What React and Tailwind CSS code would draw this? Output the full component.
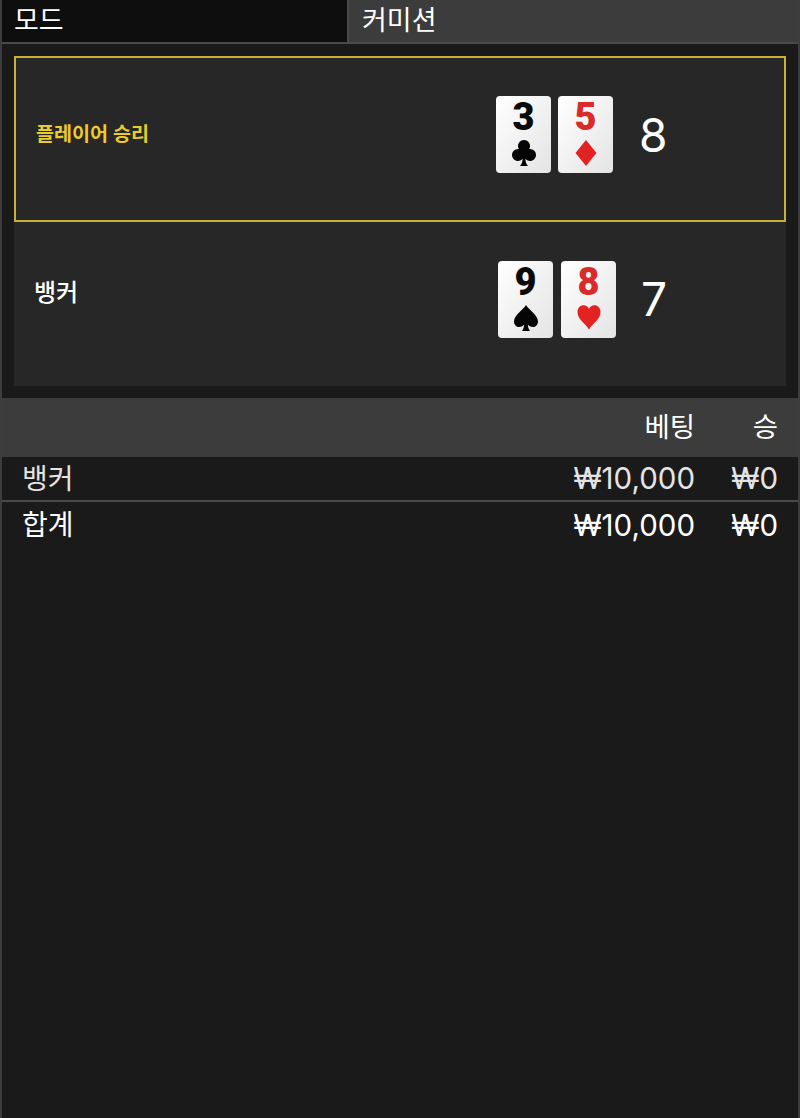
const SUITS = {
  club: "M12 0a6 6 0 0 1 5.200 9 6 6 0 1 1-3.900 9.700c.2 2.900.9 5.200 2.700 7.300H8c1.800-2.100 2.500-4.400 2.700-7.300A6 6 0 1 1 6.800 9 6 6 0 0 1 12 0z",
  diamond: "M12 0 22.500 13 12 26 1.500 13z",
  spade: "M12 0C9 5 0 10 0 16.500 0 20 2.500 22 5.200 22c2.200 0 3.800-1 5-2.500-.2 2.500-.8 4.500-2.200 6.500h8c-1.400-2-2-4-2.200-6.500 1.200 1.500 2.800 2.500 5 2.500 2.700 0 5.200-2 5.200-5.500C24 10 15 5 12 0z",
  heart: "M12 24.500C9 19 .5 14.500 .5 7 .5 3 3.400 .3 6.600 .3c2.400 0 4.300 1.300 5.400 3.500 1.100-2.200 3-3.500 5.400-3.500 3.200 0 6.100 2.700 6.100 6.700 0 7.500-8.500 12-11.500 17.500z",
};

const Card = ({ value, suit, red }) => (
  <div className="w-[55px] h-[77px] rounded-[4px] bg-gradient-to-br from-[#ffffff] to-[#e4e4e4] flex flex-col items-center">
    <span
      className={`mt-[2px] h-[38px] leading-[38px] text-[38px] font-black font-['Roboto',sans-serif] ${red ? "text-[#d92b2b]" : "text-[#0a0a0a]"}`}
    >
      {value}
    </span>
    <svg viewBox="0 0 24 26" className="mt-[4px] w-[24px] h-[26px]" fill={red ? "#e32222" : "#050505"}>
      <path d={SUITS[suit]} />
    </svg>
  </div>
);

const Row = ({ label, cards, score, won }) => (
  <div
    className={
      won
        ? "h-[166px] flex items-center border-2 border-[#c9b038] pl-[20px] pb-[9px]"
        : "h-[164px] flex items-center pl-[20px] pb-[10px]"
    }
  >
    <div
      className={
        won
          ? "w-[460px] text-[19.600px] font-semibold text-[#eccb2c]"
          : "w-[464px] mb-[12px] text-[24px] font-medium text-white"
      }
    >
      {label}
    </div>
    <div className={won ? "flex gap-[7px]" : "flex gap-[8px]"}>
      {cards.map((c) => (
        <Card key={c.value + c.suit} {...c} />
      ))}
    </div>
    <div className={`text-[46px] leading-none text-white font-['Inter',sans-serif] ${won ? "ml-[26px]" : "ml-[25px]"}`}>
      {score}
    </div>
  </div>
);

const Money = ({ children }) => <span className="text-[29.500px]">{children}</span>;

const TableRow = ({ label, bet, win, className }) => (
  <div className={`flex items-center pl-[20px] pr-[20px] text-[28px] ${className}`}>
    <span className="flex-1">{label}</span>
    <span>{bet}</span>
    <span className="w-[83px] text-right">{win}</span>
  </div>
);

export default function App() {
  return (
    <div className="w-[800px] h-[1118px] bg-[#1a1a1a] border-x-2 border-[#3d3d3d] overflow-hidden font-['Inter','Noto_Sans_CJK_KR',sans-serif]">
      <div className="h-[44px] flex gap-[2px] bg-[#4a4a4a] border-b-[2px] border-[#4a4a4a] text-[27px] text-white">
        <div className="w-[345px] pl-[12px] leading-[41px] bg-[#0e0e0e]">모드</div>
        <div className="flex-1 pl-[13px] leading-[41px] bg-[#3c3c3c]">커미션</div>
      </div>

      <div className="mx-[12px] mt-[12px] bg-[#272727]">
        <Row
          won
          label="플레이어 승리"
          score="8"
          cards={[
            { value: "3", suit: "club" },
            { value: "5", suit: "diamond", red: true },
          ]}
        />
        <Row
          label="뱅커"
          score="7"
          cards={[
            { value: "9", suit: "spade" },
            { value: "8", suit: "heart", red: true },
          ]}
        />
      </div>

      <TableRow
        label=""
        bet="베팅"
        win="승"
        className="mt-[12px] h-[59px] pt-[1px] bg-[#3c3c3c] text-white !text-[27.500px]"
      />
      <TableRow
        label="뱅커"
        bet={<Money>₩10,000</Money>}
        win={<Money>₩0</Money>}
        className="h-[43px] text-[#e4e4e4]"
      />
      <div className="h-[2px] bg-[#4a4a4a]" />
      <TableRow
        label="합계"
        bet={<Money>₩10,000</Money>}
        win={<Money>₩0</Money>}
        className="h-[46px] text-white"
      />
    </div>
  );
}
